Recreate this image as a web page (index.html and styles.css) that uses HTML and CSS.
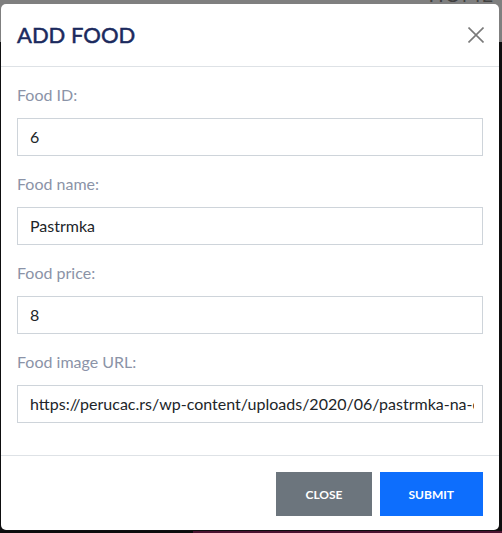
FILE: index.html
```html
<!DOCTYPE html>
<html lang="en">
<head>
<meta charset="utf-8">
<title>Add food</title>
<link rel="stylesheet" href="styles.css">
</head>
<body>
<div class="page">
  <nav class="navbar"><span class="nav-link">HOME</span></nav>
  <main class="content"></main>
  <div class="strip"><span class="strip-dark"></span><span class="strip-red"></span></div>
</div>

<div class="modal">
  <div class="modal-header">
    <h5 class="modal-title">ADD FOOD</h5>
    <button class="btn-close" aria-label="Close">
      <svg width="16" height="16" viewBox="0 0 16 16"><path d="M0.5 0.5 L15.5 15.5 M15.5 0.5 L0.5 15.5" stroke="#7a7a7a" stroke-width="1.6" fill="none"/></svg>
    </button>
  </div>
  <div class="modal-body">
    <div class="form-group">
      <label class="form-label">Food ID:</label>
      <div class="form-control"><span class="value">6</span></div>
    </div>
    <div class="form-group">
      <label class="form-label">Food name:</label>
      <div class="form-control"><span class="value">Pastrmka</span></div>
    </div>
    <div class="form-group">
      <label class="form-label">Food price:</label>
      <div class="form-control"><span class="value">8</span></div>
    </div>
    <div class="form-group">
      <label class="form-label">Food image URL:</label>
      <div class="form-control"><span class="value">https://perucac.rs/wp-content/uploads/2020/06/pastrmka-na-oblaku.jpg</span></div>
    </div>
  </div>
  <div class="modal-footer">
    <button class="btn btn-secondary">CLOSE</button>
    <button class="btn btn-primary">SUBMIT</button>
  </div>
</div>
</body>
</html>
```

FILE: styles.css
```css
* { box-sizing: border-box; }

html, body {
  margin: 0;
  padding: 0;
  height: 100%;
}

body {
  background: #0e0e0f;
  font-family: Lato, "Noto Sans", sans-serif;
  overflow: hidden;
}

.page {
  display: flex;
  flex-direction: column;
  height: 533px;
}

.navbar {
  height: 42px;
  background: #7f7f7f;
  display: flex;
  justify-content: flex-end;
  align-items: flex-end;
  padding-right: 8px;
  overflow: hidden;
}

.nav-link {
  font-size: 20px;
  font-weight: 400;
  letter-spacing: 1px;
  color: #404040;
  line-height: 20px;
  margin-bottom: 38px;
}

.content {
  flex: 1;
  background: #0e0e0f;
}

.strip {
  height: 2px;
  display: flex;
}

.strip-dark {
  width: 193px;
  background: #0b0b0c;
}

.strip-red {
  flex: 1;
  background: #4a1230;
}

.modal {
  position: absolute;
  left: 1px;
  top: 4px;
  width: 498px;
  background: #ffffff;
  border-radius: 5px;
  display: flex;
  flex-direction: column;
}

.modal-header {
  display: flex;
  align-items: center;
  justify-content: space-between;
  padding: 14px 16px 15px;
  border-bottom: 1px solid #dee2e6;
}

.modal-title {
  margin: 0;
  font-size: 22px;
  line-height: 33px;
  font-weight: 400;
  -webkit-text-stroke: 0.5px #1b2a5e;
  color: #1b2a5e;
}

.btn-close {
  border: 0;
  background: transparent;
  padding: 0;
  margin-right: -1px;
  width: 16px;
  height: 16px;
  display: flex;
}

.modal-body {
  padding: 16px 16px;
}

.form-group {
  display: flex;
  flex-direction: column;
  margin-bottom: 16px;
}

.form-label {
  font-size: 16px;
  line-height: 24px;
  color: #8b93a7;
  margin-bottom: 11px;
}

.form-control {
  width: 466px;
  height: 38px;
  border: 1px solid #ced4da;
  padding: 0 8px 0 12px;
  font-size: 16px;
  line-height: 36px;
  color: #212529;
}

.value {
  display: block;
  white-space: nowrap;
  overflow: hidden;
}

.modal-footer {
  display: flex;
  justify-content: flex-end;
  gap: 8px;
  padding: 16px 16px 14px;
  border-top: 1px solid #dee2e6;
}

.btn {
  border: 0;
  height: 44px;
  padding: 0 29px;
  font-family: Lato, "Noto Sans", sans-serif;
  font-size: 12px;
  font-weight: 700;
  color: #ffffff;
  border-radius: 0;
}

.btn-secondary { background: #6c757d; }
.btn-primary { background: #0d6efd; }
```
